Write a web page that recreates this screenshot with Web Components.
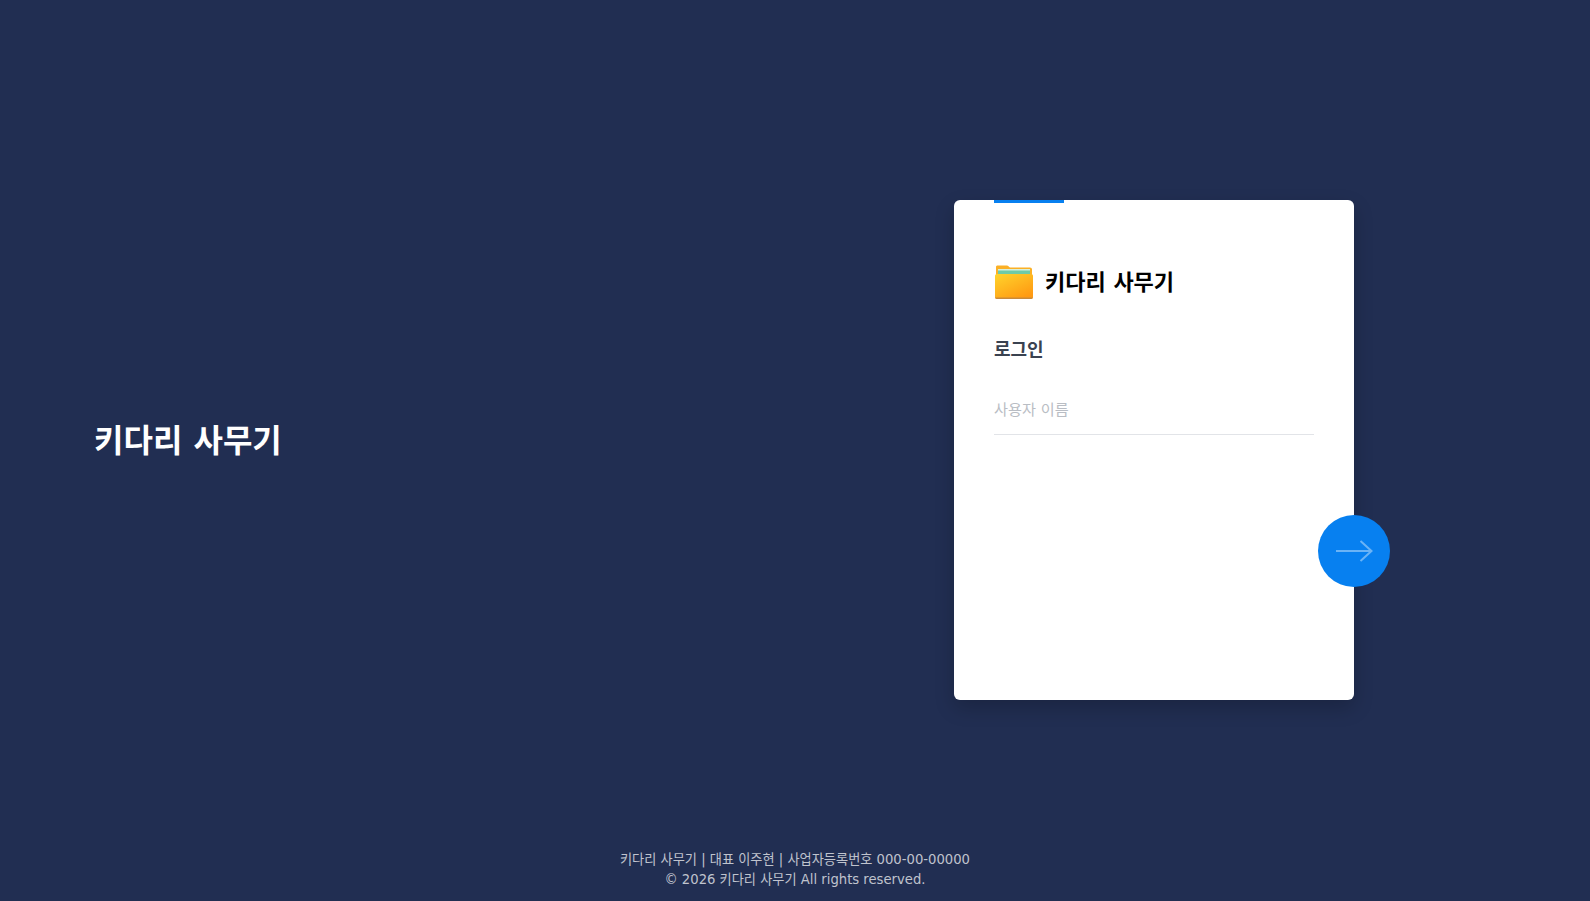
<!DOCTYPE html>
<html lang="ko">
<head>
<meta charset="utf-8">
<title>키다리 사무기</title>
<style>
    html, body { margin: 0; height: 100%; }
    body {
        background: #212e52;
        font-family: "DejaVu Sans", "Noto Sans CJK KR", sans-serif;
    }
</style>
</head>
<body>
<login-page>
    <brand-panel slot="brand">키다리 사무기</brand-panel>
    <login-card slot="card">
        <card-logo>키다리 사무기</card-logo>
        <span slot="heading">로그인</span>
        <text-field slot="field" label="사용자 이름"></text-field>
    </login-card>
    <page-footer slot="footer">
        <span>키다리 사무기 | 대표 이주현 | 사업자등록번호 000-00-00000</span>
        <span>© 2026 키다리 사무기 All rights reserved.</span>
    </page-footer>
</login-page>

<script>
// Страница: три ряда, карточка в среднем, футер в нижнем
customElements.define('login-page', class extends HTMLElement {
    constructor() {
        super();
        const shadow = this.attachShadow({ mode: 'open' });
        shadow.innerHTML = `
            <style>
                :host {
                    display: grid;
                    grid-template-columns: 60% 40%;
                    grid-template-rows: 200px 500px 1fr;
                    height: 100vh;
                    overflow: hidden;
                }
                .brand { grid-column: 1; grid-row: 2; align-self: center; }
                .card { grid-column: 2; grid-row: 2; }
                .footer { grid-column: 1 / -1; grid-row: 3; align-self: end; }
            </style>
            <div class="brand"><slot name="brand"></slot></div>
            <div class="card"><slot name="card"></slot></div>
            <div class="footer"><slot name="footer"></slot></div>
        `;
    }
});

customElements.define('brand-panel', class extends HTMLElement {
    constructor() {
        super();
        const shadow = this.attachShadow({ mode: 'open' });
        shadow.innerHTML = `
            <style>
                :host {
                    display: block;
                    padding: 0 0 18px 94px;
                    color: #fff;
                    font-size: 32px;
                    font-weight: 700;
                    line-height: 1.2;
                }
            </style>
            <slot></slot>
        `;
    }
});

customElements.define('login-card', class extends HTMLElement {
    constructor() {
        super();
        const shadow = this.attachShadow({ mode: 'open' });
        shadow.innerHTML = `
            <style>
                :host {
                    display: block;
                    position: relative;
                    box-sizing: border-box;
                    width: 400px;
                    height: 500px;
                    padding: 64px 40px 0;
                    background: #fff;
                    border-radius: 6px;
                    box-shadow: 0 8px 20px rgba(0, 0, 0, .2);
                }
                .tab {
                    position: absolute;
                    top: 0;
                    left: 40px;
                    width: 70px;
                    height: 3px;
                    background: #0780f0;
                }
                h2 {
                    margin: 36px 0 23px;
                    color: #3a4250;
                    font-size: 18px;
                    font-weight: 700;
                    line-height: 27px;
                }
                .next {
                    position: absolute;
                    top: 315px;
                    right: -36px;
                    display: flex;
                    align-items: center;
                    justify-content: center;
                    width: 72px;
                    height: 72px;
                    padding: 0;
                    border: 0;
                    border-radius: 50%;
                    background: #0780f0;
                }
            </style>
            <div class="tab"></div>
            <slot></slot>
            <h2><slot name="heading"></slot></h2>
            <slot name="field"></slot>
            <button class="next" type="button" aria-label="다음">
                <svg width="38" height="22" viewBox="0 0 38 22" fill="none" stroke="#fff" stroke-opacity=".4" stroke-width="2">
                    <path d="M1 11H36.500M25.500 1L36.500 11L25.500 21"/>
                </svg>
            </button>
        `;
    }
});

customElements.define('card-logo', class extends HTMLElement {
    constructor() {
        super();
        const shadow = this.attachShadow({ mode: 'open' });
        shadow.innerHTML = `
            <style>
                :host {
                    display: flex;
                    align-items: center;
                    gap: 11px;
                    color: #000;
                    font-size: 22px;
                    font-weight: 700;
                    line-height: 34px;
                }
                svg { flex: none; }
                .name { padding-top: 2px; }
            </style>
            <svg width="40" height="36" viewBox="0 0 40 36">
                <defs>
                    <linearGradient id="front" x1="0" y1="0" x2=".7" y2="1">
                        <stop offset="0" stop-color="#ffd42c"/>
                        <stop offset=".55" stop-color="#ffb41e"/>
                        <stop offset="1" stop-color="#ff9a12"/>
                    </linearGradient>
                </defs>
                <path d="M2 3C2 2 2.700 1.500 3.500 1.500H13C14 1.500 15 3 16 3.500H36C37.200 3.500 38 4.300 38 5.500V14H2Z" fill="#fbb026"/>
                <rect x="4" y="5" width="32" height="7" fill="#6fcaa6"/>
                <rect x="4" y="5" width="32" height="1.500" fill="#d6f0dc"/>
                <path d="M1 12C1 10.800 1.800 10 3 10H37C38.200 10 39 10.800 39 12V33C39 34.200 38.200 35 37 35H3C1.800 35 1 34.200 1 33Z" fill="url(#front)"/>
                <path d="M1 33C1 34.200 1.800 35 3 35H37C38.200 35 39 34.200 39 33V33.600H1Z" fill="#c98a3a"/>
            </svg>
            <span class="name"><slot></slot></span>
        `;
    }
});

// Поле ввода с подписью поверх него
customElements.define('text-field', class extends HTMLElement {
    constructor() {
        super();
        const shadow = this.attachShadow({ mode: 'open' });
        shadow.innerHTML = `
            <style>
                :host {
                    display: grid;
                    height: 48px;
                    border-bottom: 1px solid #e2e4e8;
                }
                label, input { grid-area: 1 / 1; }
                label {
                    color: #b9bdc4;
                    font-size: 15.200px;
                    line-height: 48px;
                    pointer-events: none;
                }
                input {
                    min-width: 0;
                    padding: 0;
                    border: 0;
                    outline: 0;
                    background: transparent;
                    font: inherit;
                }
            </style>
            <label for="value">${this.getAttribute('label')}</label>
            <input id="value" type="text">
        `;
    }
});

customElements.define('page-footer', class extends HTMLElement {
    constructor() {
        super();
        const shadow = this.attachShadow({ mode: 'open' });
        shadow.innerHTML = `
            <style>
                :host {
                    display: flex;
                    flex-direction: column;
                    align-items: center;
                    padding-bottom: 11px;
                    color: rgba(255, 255, 255, .72);
                    font-size: 13.200px;
                    line-height: 20px;
                }
            </style>
            <slot></slot>
        `;
    }
});
</script>
</body>
</html>
